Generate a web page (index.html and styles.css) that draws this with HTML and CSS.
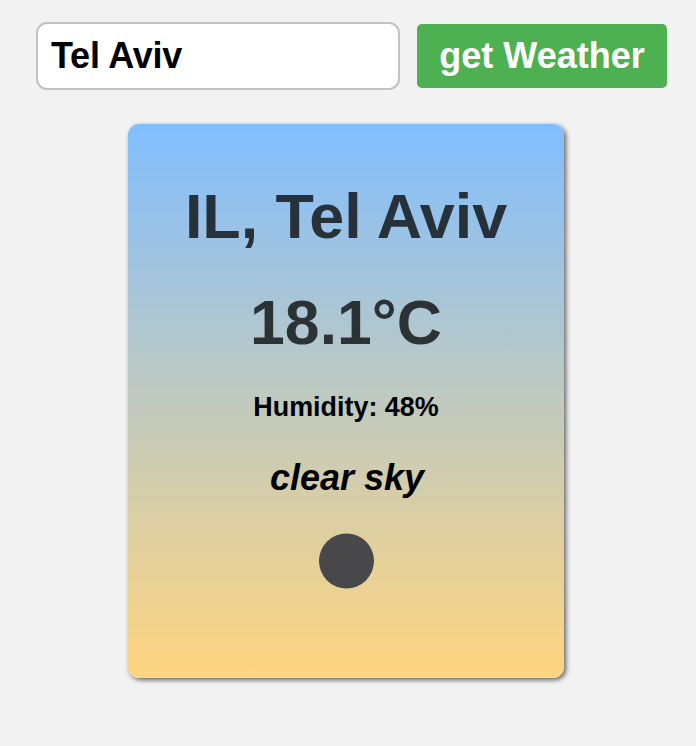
FILE: index.html
```html
<!DOCTYPE html>
<html lang="en">
<head>
<meta charset="utf-8">
<title>Weather</title>
<link rel="stylesheet" href="styles.css">
</head>
<body>
<form class="weather-form">
<input class="city-input" type="text" value="Tel Aviv" aria-label="City">
<button class="submit-button" type="button">get Weather</button>
</form>
<main class="card">
<h1 class="city">IL, Tel Aviv</h1>
<p class="temp">18.1°C</p>
<p class="humidity">Humidity: 48%</p>
<p class="description">clear sky</p>
<svg class="icon" viewBox="0 0 56 56" aria-hidden="true"><circle cx="28.5" cy="28" r="27.5"/></svg>
</main>
</body>
</html>
```

FILE: styles.css
```css
* { box-sizing: border-box; }
body {
  margin: 0;
  min-height: 746px;
  background: #f2f2f2;
  font-family: "Liberation Sans", Arial, sans-serif;
  font-weight: bold;
}
.weather-form {
  display: flex;
  align-items: center;
  gap: 17px;
  padding: 22px 0 0 36px;
}
.city-input {
  width: 364px;
  height: 68px;
  padding: 0 13px;
  border: 2px solid #c2c2c2;
  border-radius: 11px;
  background: #fff;
  color: #000;
  font: bold 36px "Liberation Sans", Arial, sans-serif;
  letter-spacing: -0.2px;
}
.submit-button {
  width: 250px;
  height: 64px;
  padding: 0;
  border: 0;
  border-radius: 5px;
  background: #4eb151;
  color: #fff;
  font: bold 36px "Liberation Sans", Arial, sans-serif;
}
.card {
  display: flex;
  flex-direction: column;
  align-items: center;
  width: 436px;
  height: 554px;
  margin: 34px 0 0 128px;
  padding-top: 55px;
  border-radius: 11px;
  background: linear-gradient(180deg, #81beff, #ffd57f);
  box-shadow: 2px 2px 5px rgba(0, 0, 0, 0.6);
  color: #000;
}
.city, .temp, .humidity, .description { margin: 0; white-space: nowrap; }
.city { font-size: 62.8px; line-height: 74px; color: rgba(0, 0, 0, 0.75); }
.temp { margin-top: 32px; font-size: 62.5px; line-height: 74px; color: rgba(0, 0, 0, 0.75); }
.humidity { margin-top: 33px; font-size: 26.9px; line-height: 31px; }
.description { margin-top: 34px; padding-left: 2px; font-size: 36px; line-height: 42px; font-style: italic; }
.icon { width: 56px; height: 56px; margin-top: 34px; fill: #48484a; }
```
